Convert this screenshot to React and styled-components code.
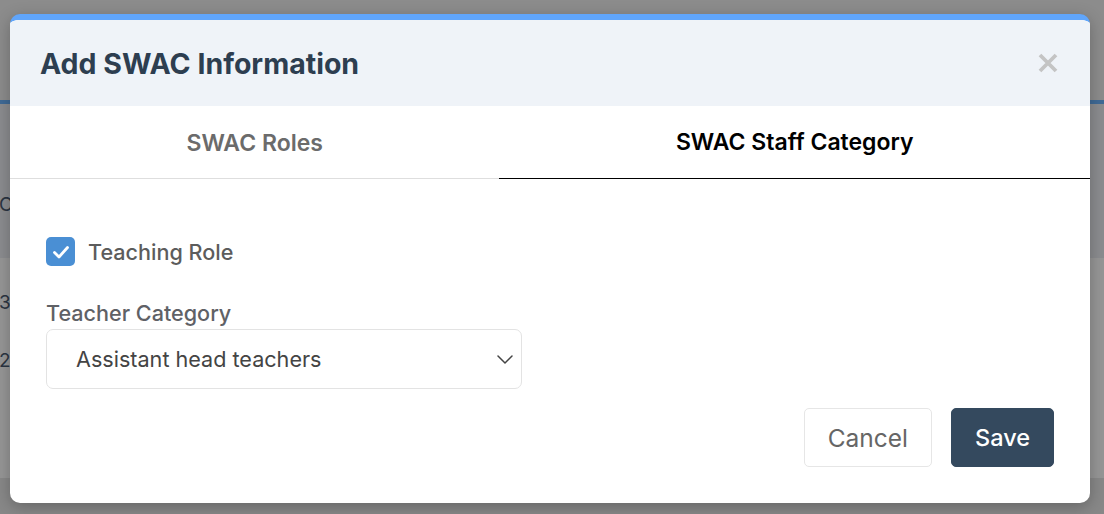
import React, { useState } from "react";
import styled, { createGlobalStyle } from "styled-components";

const GlobalStyle = createGlobalStyle`
  html, body {
    margin: 0;
    padding: 0;
    font-family: Inter, "Noto Sans", Arial, sans-serif;
  }
  * { box-sizing: border-box; }
`;

const Page = styled.div`
  position: relative;
  width: 1104px;
  height: 514px;
  overflow: hidden;
  background: #ffffff;
`;

const TopBar = styled.div`
  height: 100px;
  background: #eeeeee;
`;

const BlueLine = styled.div`
  height: 4px;
  background: #6cb4ff;
`;

const TableHead = styled.div`
  height: 154px;
  background: #eceff4;
  display: flex;
  align-items: center;
  padding-top: 48px;
`;

const TableRows = styled.div`
  height: 220px;
  background: #ffffff;
  display: flex;
  flex-direction: column;
  padding-top: 34px;
  gap: 36px;
`;

const Footer = styled.div`
  height: 36px;
  background: #e8e8e8;
`;

const CellText = styled.div`
  margin-left: ${(p) => p.offset || 0}px;
  font-size: 19px;
  color: #4a5a70;
  line-height: 22px;
`;

const Overlay = styled.div`
  position: absolute;
  inset: 0;
  background: rgba(0, 0, 0, 0.41);
  padding: 14px 10px;
`;

const Modal = styled.div`
  width: 1080px;
  background: #fff;
  border-radius: 10px;
  border-top: 6px solid #60a5fa;
  overflow: hidden;
  box-shadow: 0 4px 16px rgba(0, 0, 0, 0.25);
`;

const Header = styled.div`
  height: 86px;
  background: #eff3f8;
  display: flex;
  align-items: center;
  justify-content: space-between;
  padding: 0 30px 0 30px;
`;

const Title = styled.h2`
  margin: 0;
  font-size: 28.5px;
  font-weight: 700;
  color: #2d3e50;
`;

const CloseBtn = styled.button`
  border: none;
  background: transparent;
  padding: 0;
  width: 24px;
  height: 24px;
  display: flex;
  align-items: center;
  justify-content: center;
  cursor: pointer;

  svg {
    width: 20px;
    height: 20px;
  }
`;

const Tabs = styled.div`
  display: flex;
  height: 73px;
  border-bottom: 1px solid #dedede;
`;

const Tab = styled.button`
  flex: 1 1 auto;
  border: none;
  background: transparent;
  font-family: inherit;
  font-size: 23px;
  font-weight: 600;
  color: ${(p) => (p.active ? "#000" : "#6b6b6b")};
  border-bottom: ${(p) => (p.active ? "1px solid #000" : "none")};
  margin-bottom: -1px;
  padding: 0;
  cursor: pointer;
`;

const Body = styled.div`
  padding: 58px 36px 36px 36px;
`;

const Form = styled.div`
  width: 476px;
  display: flex;
  flex-direction: column;
`;

const CheckRow = styled.label`
  display: flex;
  align-items: center;
  gap: 13px;
  font-size: 21.6px;
  font-weight: 500;
  color: #5c5c5c;
  cursor: pointer;
`;

const CheckBox = styled.span`
  width: 29px;
  height: 29px;
  border-radius: 5px;
  background: ${(p) => (p.checked ? "#4a8fd4" : "#fff")};
  border: ${(p) => (p.checked ? "none" : "1px solid #ccc")};
  display: flex;
  align-items: center;
  justify-content: center;

  svg {
    width: 18px;
    height: 18px;
  }
`;

const FieldLabel = styled.div`
  margin-top: 35px;
  font-size: 21.6px;
  font-weight: 500;
  color: #5f6166;
  line-height: 24px;
`;

const SelectBox = styled.div`
  margin-top: 4px;
  height: 60px;
  border: 1px solid #e3e3e3;
  border-radius: 7px;
  display: flex;
  align-items: center;
  justify-content: space-between;
  padding: 0 5px 0 29px;
  font-size: 21.6px;
  color: #444;

  svg {
    width: 22px;
    height: 22px;
  }
`;

const Actions = styled.div`
  display: flex;
  justify-content: flex-end;
  gap: 19px;
  margin-top: 19px;
`;

const Button = styled.button`
  height: 59px;
  padding: 0 23px;
  border-radius: 5px;
  font-family: inherit;
  font-size: ${(p) => (p.primary ? 23.5 : 24.5)}px;
  font-weight: ${(p) => (p.primary ? 500 : 400)};
  color: ${(p) => (p.primary ? "#fff" : "#666")};
  background: ${(p) => (p.primary ? "#34495e" : "#fff")};
  border: 1px solid ${(p) => (p.primary ? "#34495e" : "#e6e6e6")};
  cursor: pointer;
`;

export default function App() {
  const [tab, setTab] = useState(1);
  const [teaching, setTeaching] = useState(true);

  return (
    <>
      <GlobalStyle />
      <Page>
        {/* page behind the dialog */}
        <TopBar />
        <BlueLine />
        <TableHead>
          <CellText offset={-1}>Code</CellText>
        </TableHead>
        <TableRows>
          <CellText offset={-1}>3</CellText>
          <CellText offset={-1}>2</CellText>
        </TableRows>
        <Footer />

        <Overlay>
          <Modal>
            <Header>
              <Title>Add SWAC Information</Title>
              <CloseBtn aria-label="Close">
                <svg viewBox="0 0 20 20">
                  <path
                    d="M2 2 L18 18 M18 2 L2 18"
                    stroke="#c4c4c4"
                    strokeWidth="3.8"
                    strokeLinecap="butt"
                  />
                </svg>
              </CloseBtn>
            </Header>

            <Tabs>
              <Tab active={tab === 0} onClick={() => setTab(0)}>
                SWAC Roles
              </Tab>
              <Tab active={tab === 1} onClick={() => setTab(1)}>
                SWAC Staff Category
              </Tab>
            </Tabs>

            <Body>
              <Form>
                <CheckRow onClick={() => setTeaching(!teaching)}>
                  <CheckBox checked={teaching}>
                    {teaching && (
                      <svg viewBox="0 0 18 18">
                        <path
                          d="M2.5 9.5 L7 14 L15.5 4.5"
                          fill="none"
                          stroke="#fff"
                          strokeWidth="2.8"
                          strokeLinecap="round"
                          strokeLinejoin="round"
                        />
                      </svg>
                    )}
                  </CheckBox>
                  Teaching Role
                </CheckRow>

                <FieldLabel>Teacher Category</FieldLabel>
                <SelectBox>
                  Assistant head teachers
                  <svg viewBox="0 0 22 22">
                    <path
                      d="M4 8 L11 15 L18 8"
                      fill="none"
                      stroke="#444"
                      strokeWidth="1.5"
                      strokeLinecap="round"
                      strokeLinejoin="round"
                    />
                  </svg>
                </SelectBox>
              </Form>

              <Actions>
                <Button>Cancel</Button>
                <Button primary>Save</Button>
              </Actions>
            </Body>
          </Modal>
        </Overlay>
      </Page>
    </>
  );
}
